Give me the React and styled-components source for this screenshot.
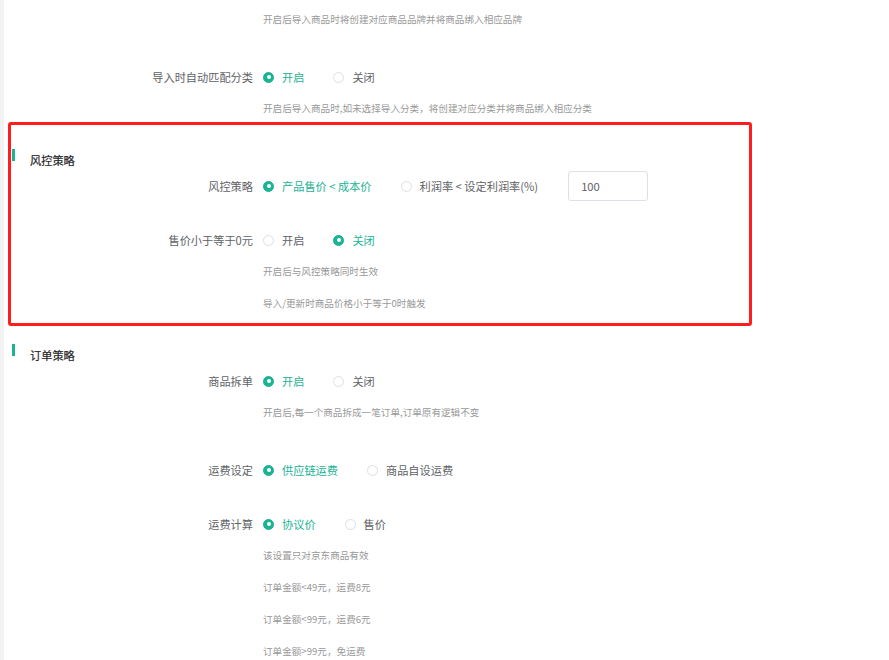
import React from "react";
import styled, { createGlobalStyle } from "styled-components";

const GREEN = "#1ab394";

const Global = createGlobalStyle`
  html, body { margin: 0; padding: 0; background: #fff; overflow: hidden; }
  body { font-family: "Noto Sans CJK SC", "Noto Sans", sans-serif; }
  * { box-sizing: border-box; }
`;

const Page = styled.div`
  display: flex;
  width: 889px;
  height: 660px;
  overflow: hidden;
`;

const SideStrip = styled.div`
  width: 4px;
  flex: none;
  background: #f2f2f2;
`;

const Main = styled.main`
  flex: 1;
  display: flex;
  flex-direction: column;
  padding-top: 3px;
  background: #fff;
`;

const Section = styled.section`
  position: relative;
  display: flex;
  flex-direction: column;
  margin-top: 22px;
`;

const RedFrame = styled.div`
  position: absolute;
  top: -27px;
  bottom: -4px;
  left: 4px;
  right: 137px;
  border: 3px solid #ff1d1d;
  border-radius: 3px;
  pointer-events: none;
`;

const Header = styled.div`
  display: flex;
  align-items: flex-start;
  height: 22px;
  padding-left: 8px;
`;

const Bar = styled.span`
  width: 3px;
  height: 12px;
  background: ${GREEN};
`;

const Title = styled.h3`
  margin: 0 0 0 15px;
  font-size: 11.2px;
  line-height: 22px;
  font-weight: 400;
  color: #262626;
  -webkit-text-stroke: 0.2px #262626;
`;

const FormItem = styled.div`
  display: grid;
  grid-template-columns: 259px 1fr;
  & + & { margin-top: 24px; }
`;

const Label = styled.label`
  grid-column: 1;
  padding-right: 10px;
  height: 30px;
  line-height: 30px;
  text-align: right;
  font-size: 11.2px;
  color: #606266;
  white-space: nowrap;
`;

const Controls = styled.div`
  grid-column: 2;
  display: flex;
  align-items: center;
  height: 30px;
`;

const Option = styled.span`
  display: inline-flex;
  align-items: center;
  margin-right: 29px;
  font-size: 11.2px;
  color: ${(p) => (p.$checked ? GREEN : "#606266")};
  white-space: nowrap;
`;

const Circle = styled.span`
  width: 11px;
  height: 11px;
  border-radius: 50%;
  margin-right: 8px;
  border: 1px solid ${(p) => (p.$checked ? GREEN : "#dcdfe6")};
  background: ${(p) => (p.$checked ? GREEN : "#fff")};
  display: inline-flex;
  align-items: center;
  justify-content: center;
  &::after {
    content: "";
    width: 4px;
    height: 4px;
    border-radius: 50%;
    background: #fff;
    display: ${(p) => (p.$checked ? "block" : "none")};
  }
`;

const NumberInput = styled.input`
  width: 80px;
  height: 30px;
  margin-left: 1px;
  border: 1px solid #dcdfe6;
  border-radius: 3px;
  padding: 0 12px;
  font-family: "Noto Sans CJK SC", "Noto Sans", sans-serif;
  font-size: 11.2px;
  color: #606266;
  outline: none;
`;

const Hints = styled.div`
  grid-column: 2;
  display: flex;
  flex-direction: column;
  gap: 12px;
  padding-top: 6px;
  margin-bottom: 9px;
`;

const Hint = styled.div`
  font-size: 9.6px;
  line-height: 20px;
  color: #999;
  white-space: nowrap;
`;

function Radio({ checked, children }) {
  return (
    <Option $checked={checked}>
      <Circle $checked={checked} />
      {children}
    </Option>
  );
}

function Item({ label, options, hints, extra }) {
  return (
    <FormItem>
      {label && <Label>{label}</Label>}
      {options && (
        <Controls>
          {options.map(([text, checked]) => (
            <Radio key={text} checked={checked}>
              {text}
            </Radio>
          ))}
          {extra}
        </Controls>
      )}
      {hints && (
        <Hints>
          {hints.map((h) => (
            <Hint key={h}>{h}</Hint>
          ))}
        </Hints>
      )}
    </FormItem>
  );
}

export default function App() {
  return (
    <>
      <Global />
      <Page>
        <SideStrip />
        <Main>
          <Item hints={["开启后导入商品时将创建对应商品品牌并将商品绑入相应品牌"]} />
          <Item
            label="导入时自动匹配分类"
            options={[["开启", true], ["关闭", false]]}
            hints={["开启后导入商品时,如未选择导入分类，将创建对应分类并将商品绑入相应分类"]}
          />

          <Section>
            <RedFrame />
            <Header>
              <Bar />
              <Title>风控策略</Title>
            </Header>
            <Item
              label="风控策略"
              options={[["产品售价 < 成本价", true], ["利润率 < 设定利润率(%)", false]]}
              extra={<NumberInput defaultValue="100" />}
            />
            <Item
              label="售价小于等于0元"
              options={[["开启", false], ["关闭", true]]}
              hints={["开启后与风控策略同时生效", "导入/更新时商品价格小于等于0时触发"]}
            />
          </Section>

          <Section>
            <Header>
              <Bar />
              <Title>订单策略</Title>
            </Header>
            <Item
              label="商品拆单"
              options={[["开启", true], ["关闭", false]]}
              hints={["开启后,每一个商品拆成一笔订单,订单原有逻辑不变"]}
            />
            <Item
              label="运费设定"
              options={[["供应链运费", true], ["商品自设运费", false]]}
            />
            <Item
              label="运费计算"
              options={[["协议价", true], ["售价", false]]}
              hints={[
                "该设置只对京东商品有效",
                "订单金额<49元，运费8元",
                "订单金额<99元，运费6元",
                "订单金额>99元，免运费",
              ]}
            />
          </Section>
        </Main>
      </Page>
    </>
  );
}
